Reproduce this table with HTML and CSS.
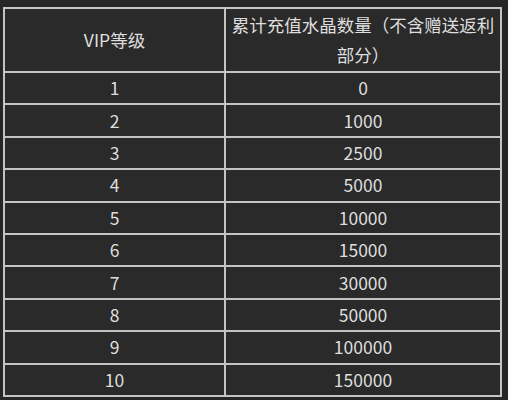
FILE: index.html
```html
<!DOCTYPE html>
<html lang="zh">
<head>
<meta charset="utf-8">
<link rel="stylesheet" href="styles.css">
</head>
<body>
<table class="vip">
  <thead>
    <tr class="head">
      <th class="c1">VIP等级</th>
      <th class="c2">累计充值水晶数量（不含赠送返利部分）</th>
    </tr>
  </thead>
  <tbody>
    <tr><td>1</td><td>0</td></tr>
    <tr><td>2</td><td>1000</td></tr>
    <tr><td>3</td><td>2500</td></tr>
    <tr><td>4</td><td>5000</td></tr>
    <tr><td>5</td><td>10000</td></tr>
    <tr><td>6</td><td>15000</td></tr>
    <tr><td>7</td><td>30000</td></tr>
    <tr><td>8</td><td>50000</td></tr>
    <tr><td>9</td><td>100000</td></tr>
    <tr><td>10</td><td>150000</td></tr>
  </tbody>
</table>
</body>
</html>
```

FILE: styles.css
```css
html, body {
  margin: 0;
  padding: 0;
  background: #262626;
}
body {
  padding: 7px 0 0 3px;
  font-family: "Noto Sans CJK SC", "Noto Sans", sans-serif;
  font-size: 17.5px;
  color: #dedede;
}
.vip {
  border-collapse: collapse;
  width: 499px;
  background: #2a2a2a;
  table-layout: fixed;
}
.vip th, .vip td {
  border: 2px solid #c4c4c4;
  text-align: center;
  vertical-align: middle;
  padding: 0;
  font-weight: normal;
  line-height: 30px;
}
.vip .c1 {
  width: 219px;
}
.head {
  height: 64px;
}
.vip tbody tr {
  height: 32.4px;
}
.vip td {
  line-height: 20px;
}
```
